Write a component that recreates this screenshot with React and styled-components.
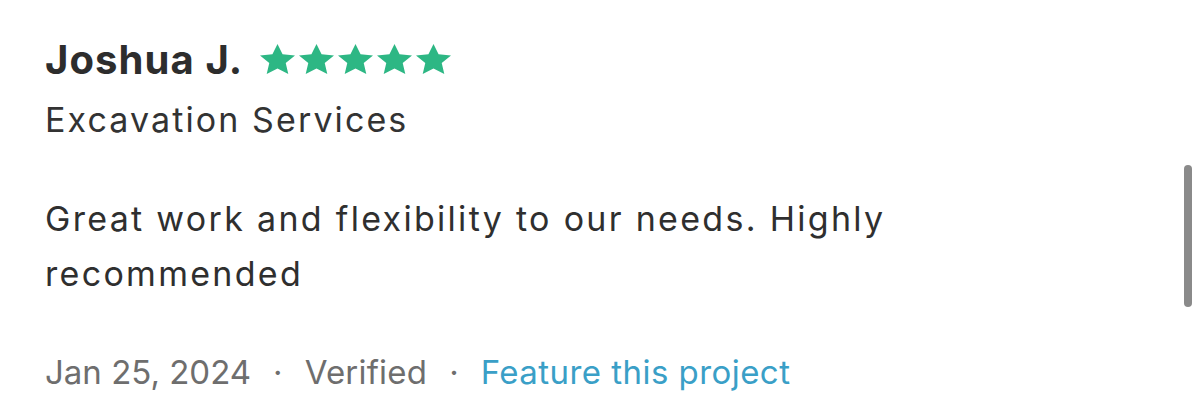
import React from "react";
import styled, { createGlobalStyle } from "styled-components";

const Global = createGlobalStyle`
  html, body { margin: 0; padding: 0; background: #fff; }
  body { font-family: Inter, "Noto Sans", sans-serif; }
`;

const Page = styled.div`
  position: relative;
  width: 1200px;
  height: 416px;
  overflow: hidden;
  background: #fff;
`;

const Card = styled.div`
  display: flex;
  flex-direction: column;
  padding: 34px 0 0 45px;
`;

const NameRow = styled.div`
  display: flex;
  align-items: center;
  gap: 17px;
`;

const Name = styled.div`
  font-size: 40px;
  font-weight: 700;
  color: #2d2d2d;
  line-height: 52px;
  letter-spacing: 1.1px;
`;

const Stars = styled.div`
  display: flex;
  gap: 4px;
  margin-top: -3px;
`;

const Service = styled.div`
  font-size: 34px;
  color: #333;
  line-height: 48px;
  margin-top: 10px;
  letter-spacing: 2.1px;
`;

const Body = styled.p`
  margin: 47px 0 0;
  font-size: 34px;
  color: #2f2f2f;
  line-height: 55px;
  letter-spacing: 2.3px;
  max-width: 900px;
`;

const Meta = styled.div`
  display: flex;
  align-items: center;
  margin-top: 48px;
  font-size: 33px;
  line-height: 46px;
  color: #6e6e6e;
`;

const Dot = styled.span`
  margin: 0 22px;
`;

const Verified = styled.span`
  letter-spacing: 0.2px;
`;

const Link = styled.a`
  color: #3a9fc7;
  text-decoration: none;
  letter-spacing: 0.45px;
`;

const Scrollbar = styled.div`
  position: absolute;
  right: 8px;
  top: 165px;
  width: 8px;
  height: 142px;
  border-radius: 4px;
  background: #8a8a8a;
`;

const Star = () => (
  <svg width="35" height="30" viewBox="0 0 20 19" preserveAspectRatio="none">
    <path
      fill="#2db784"
      d="M10 0L12.9 6.5L20 7.26L14.7 12.03L16.17 19L10 15.44L3.83 19L5.3 12.03L0 7.26L7.1 6.5Z"
    />
  </svg>
);

export default function App() {
  return (
    <Page>
      <Global />
      <Card>
        <NameRow>
          <Name>Joshua J.</Name>
          <Stars>
            {[0, 1, 2, 3, 4].map((i) => (
              <Star key={i} />
            ))}
          </Stars>
        </NameRow>
        <Service>Excavation Services</Service>
        <Body>Great work and flexibility to our needs. Highly recommended</Body>
        <Meta>
          <span>Jan 25, 2024</span>
          <Dot>·</Dot>
          <Verified>Verified</Verified>
          <Dot>·</Dot>
          <Link href="#">Feature this project</Link>
        </Meta>
      </Card>
      <Scrollbar />
    </Page>
  );
}
